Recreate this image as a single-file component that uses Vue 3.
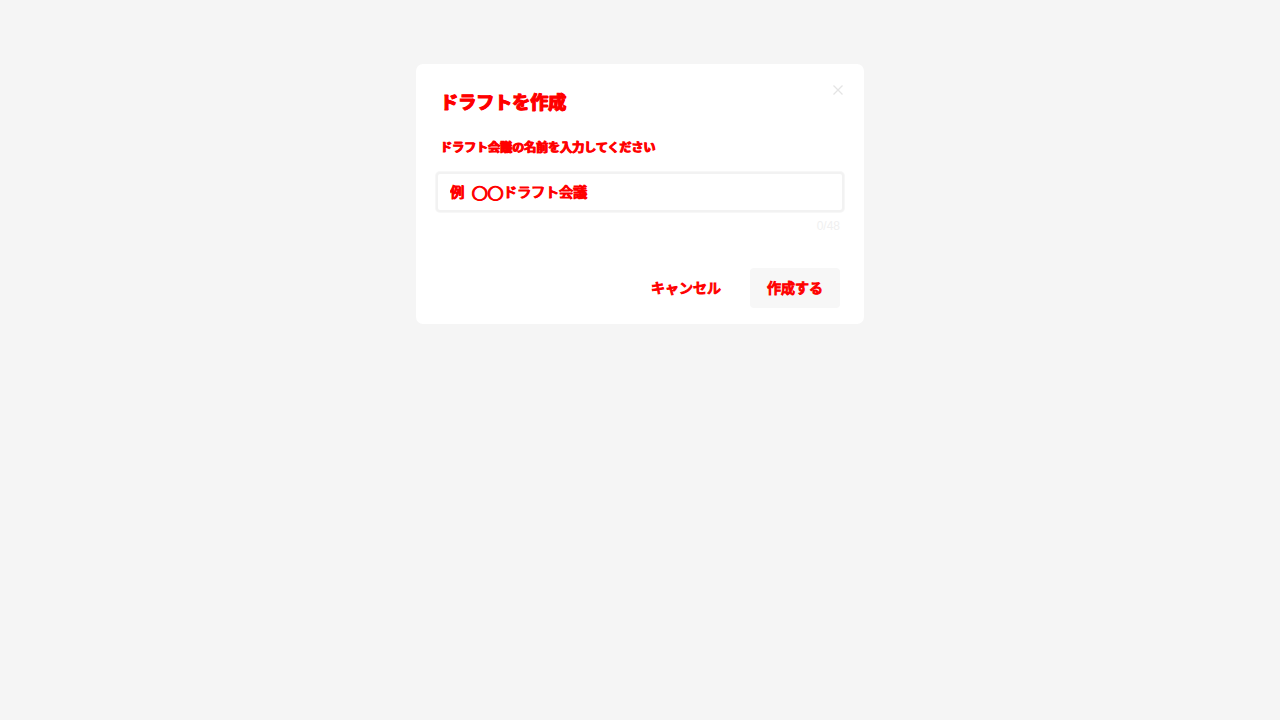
<script setup>
import { ref } from 'vue'

const maxLength = 48
const name = ref('')
</script>

<template>
  <main class="backdrop">
    <form class="dialog" role="dialog" aria-labelledby="dialog-title" @submit.prevent>
      <button class="close" type="button" aria-label="閉じる">
        <svg width="12" height="12" viewBox="0 0 12 12" aria-hidden="true">
          <path d="M1.5 1.5L10.5 10.5M10.5 1.5L1.5 10.5" fill="none" stroke="currentColor" stroke-width="1.3" />
        </svg>
      </button>
      <h1 id="dialog-title" class="title">ドラフトを作成</h1>
      <label class="label" for="draft-name">ドラフト会議の名前を入力してください</label>
      <input id="draft-name" v-model="name" class="field" type="text" :maxlength="maxLength" placeholder="例&nbsp; ◯◯ドラフト会議" />
      <div class="counter">{{ name.length }}/{{ maxLength }}</div>
      <div class="actions">
        <button class="button" type="button">キャンセル</button>
        <button class="button primary" type="submit">作成する</button>
      </div>
    </form>
  </main>
</template>

<style>
body {
  margin: 0;
  background: #f5f5f5;
}
</style>

<style scoped>
.backdrop {
  box-sizing: border-box;
  min-height: 100vh;
  padding: 64px 16px;
  background: #f5f5f5;
  font-family: "Liberation Sans", "Noto Sans CJK JP", sans-serif;
}
.dialog {
  position: relative;
  box-sizing: border-box;
  max-width: 448px;
  margin: 0 auto;
  padding: 24px 24px 16px;
  border-radius: 7px;
  background: #fff;
  color: #f00;
}
.close {
  position: absolute;
  top: 16px;
  right: 16px;
  display: flex;
  align-items: center;
  justify-content: center;
  width: 20px;
  height: 20px;
  padding: 0;
  border: 0;
  background: none;
  color: #e4e4e4;
}
.title {
  margin: 0;
  font-size: 18px;
  line-height: 30px;
  font-weight: 700;
  -webkit-text-stroke: 1px #f00;
  text-shadow: 1px 0 #f00;
}
.label {
  display: block;
  margin-top: 20px;
  font-size: 12px;
  line-height: 20px;
  font-weight: 500;
  -webkit-text-stroke: 1px #f00;
  text-shadow: 1px 0 #f00;
}
.field {
  display: block;
  box-sizing: border-box;
  width: calc(100% + 8px);
  height: 40px;
  margin: 14px -4px 0;
  padding: 0 12px;
  border: 2px solid #f2f2f2;
  border-radius: 4px;
  box-shadow: 0 0 0 1px #f7f7f7;
  background: #fff;
  outline: none;
  font-family: "Liberation Sans", "DejaVu Sans", "Noto Sans CJK JP", sans-serif;
  font-size: 14px;
}
.field::placeholder {
  color: #f00;
  opacity: 1;
  -webkit-text-stroke: 1px #f00;
  text-shadow: 1px 0 #f00;
}
.counter {
  margin-top: 6px;
  color: #f0f0f0;
  font-size: 12px;
  line-height: 16px;
  text-align: right;
}
.actions {
  display: flex;
  justify-content: flex-end;
  gap: 12px;
  margin-top: 34px;
}
.button {
  height: 40px;
  padding: 0 17px 2px;
  border: 0;
  border-radius: 4px;
  background: none;
  color: #f00;
  font-family: inherit;
  font-size: 14px;
  font-weight: 500;
  -webkit-text-stroke: 1px #f00;
}
.primary {
  background: #f7f7f7;
}
</style>
